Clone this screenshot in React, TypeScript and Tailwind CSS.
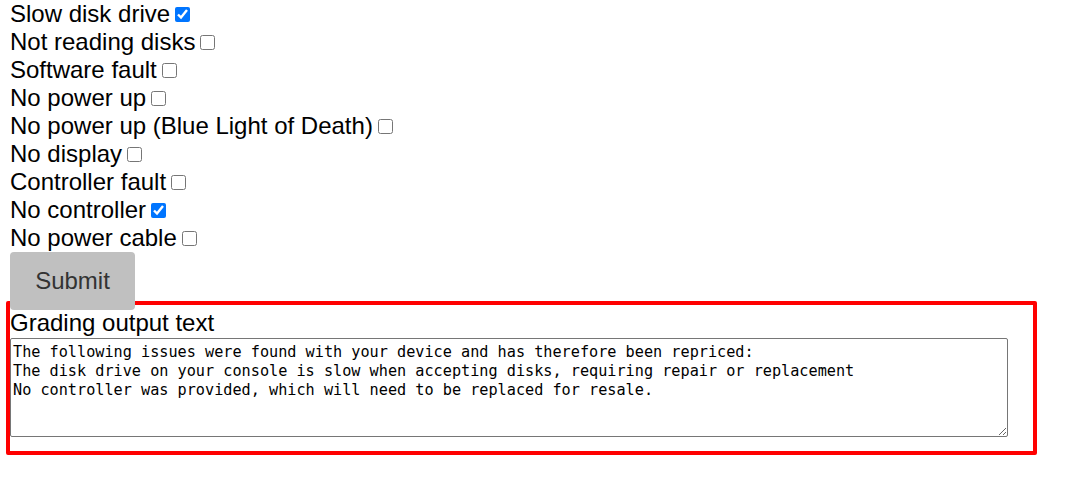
import React from "react";

const issues: { label: string; checked: boolean }[] = [
  { label: "Slow disk drive", checked: true },
  { label: "Not reading disks", checked: false },
  { label: "Software fault", checked: false },
  { label: "No power up", checked: false },
  { label: "No power up (Blue Light of Death)", checked: false },
  { label: "No display", checked: false },
  { label: "Controller fault", checked: false },
  { label: "No controller", checked: true },
  { label: "No power cable", checked: false },
];

const output =
  "The following issues were found with your device and has therefore been repriced:\n" +
  "The disk drive on your console is slow when accepting disks, requiring repair or replacement\n" +
  "No controller was provided, which will need to be replaced for resale.";

export default function App() {
  return (
    <div className="min-h-screen bg-white pl-[10px] font-['Liberation_Sans',Arial,sans-serif] text-[24px] leading-[28px] text-black">
      {/* Issue checkboxes */}
      <form>
        {issues.map((issue) => (
          <div key={issue.label}>
            {issue.label}
            <input
              type="checkbox"
              defaultChecked={issue.checked}
              className="m-[3px_3px_3px_5px] h-[15px] w-[15px] align-baseline"
            />
          </div>
        ))}
        <button
          type="button"
          className="relative z-10 block h-[58px] w-[125px] rounded-[4px] bg-[#c0c0c0] text-[24px] text-[#333333]"
        >
          Submit
        </button>
      </form>

      {/* Output panel */}
      <div className="-mt-[9px] -ml-[4px] h-[154px] w-[1031px] rounded-[2px] border-4 border-[#ff0000]">
        <label htmlFor="grading-output" className="mt-[4px] block leading-[28px]">
          Grading output text
        </label>
        <textarea
          id="grading-output"
          readOnly
          defaultValue={output}
          className="mt-[1px] block h-[99px] w-[998px] rounded-[2px] border border-[#767676] px-[2px] pt-[4px] pb-[2px] font-['DejaVu_Sans_Mono',monospace] text-[15.2px] leading-[19px] text-black"
        />
      </div>
    </div>
  );
}
